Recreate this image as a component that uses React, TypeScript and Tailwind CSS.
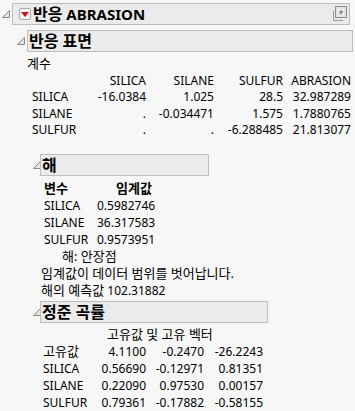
import React from "react";

// JMP-style report outline: 반응 ABRASION
const font = { fontFamily: '"Noto Sans", "Noto Sans CJK KR", sans-serif' };

function Disclosure({ className = "" }: { className?: string }) {
  return (
    <svg width="8" height="8" viewBox="0 0 8 8" className={className}>
      <polygon points="7.5,0.5 7.5,7.5 0.5,7.5" fill="#e4e4e4" stroke="#8a8a8a" strokeWidth="1" />
    </svg>
  );
}

function RedMenu() {
  return (
    <div className="ml-[6px] flex h-[12px] w-[12px] items-center justify-center rounded-[2px] border border-[#a8a8a8] bg-[#f4f4f4]">
      <svg width="8" height="5" viewBox="0 0 8 5">
        <polygon points="0,0 8,0 4,5" fill="#d0141a" />
      </svg>
    </div>
  );
}

function StarIcon() {
  return (
    <svg width="16" height="16" viewBox="0 0 16 16" className="mr-[1px]">
      <path d="M1.5 5 V14.5 H11" fill="none" stroke="#9a9a9a" strokeWidth="1" />
      <rect x="3.5" y="0.5" width="11" height="11" fill="#ececec" stroke="#8c8c8c" strokeWidth="1" />
      <rect x="5" y="2" width="8" height="8" fill="#f6f6f6" stroke="#c4c4c4" strokeWidth="0.6" />
      <polygon points="9,3 9.8,5.2 12,5.3 10.3,6.6 10.9,8.8 9,7.5 7.1,8.8 7.7,6.6 6,5.3 8.2,5.2" fill="#8a8a8a" />
    </svg>
  );
}

function Header({ width, children }: { width: string; children?: React.ReactNode }) {
  return (
    <div className={`flex h-[22px] items-center border border-[#bdbdbd] bg-[#ebebeb] ${width}`}>
      {children}
    </div>
  );
}

// Korean runs are set a touch larger, like Malgun Gothic next to Segoe UI
function Ko({ children, className = "" }: { children: React.ReactNode; className?: string }) {
  return <span className={`text-[13px] leading-none ${className}`}>{children}</span>;
}

export default function App() {
  const coef = [
    ["SILICA", "-16.0384", "1.025", "28.5", "32.987289"],
    ["SILANE", ".", "-0.034471", "1.575", "1.7880765"],
    ["SULFUR", ".", ".", "-6.288485", "21.813077"],
  ];
  const crit = [
    ["SILICA", "0.5982746"],
    ["SILANE", "36.317583"],
    ["SULFUR", "0.9573951"],
  ];
  const eigen = [
    ["고유값", "4.1100", "-0.2470", "-26.2243"],
    ["SILICA", "0.56690", "-0.12971", "0.81351"],
    ["SILANE", "0.22090", "0.97530", "0.00157"],
    ["SULFUR", "0.79361", "-0.17882", "-0.58155"],
  ];

  return (
    <div className="h-[411px] w-[355px] overflow-hidden bg-[#f7f7f7] text-[12px] text-black" style={font}>
      {/* top outline */}
      <div className="flex items-start pt-[3px]">
        <Disclosure className="ml-[2px] mt-[7px]" />
        <div className="ml-[2px]">
          <Header width="w-[338px]">
            <RedMenu />
            <span className="ml-[2px] text-[15px] font-bold leading-none">
              <span className="text-[16px]">반응</span> ABRASION
            </span>
            <div className="flex-1" />
            <StarIcon />
          </Header>
        </div>
      </div>

      {/* 반응 표면 */}
      <div className="mt-[5px] flex items-start">
        <Disclosure className="ml-[17px] mt-[7px]" />
        <div className="ml-[2px]">
          <Header width="w-[326px]">
            <span className="ml-[1px] text-[16px] font-bold leading-none">반응 표면</span>
          </Header>
        </div>
      </div>

      <div className="ml-[27px] mt-[4px] leading-[16.5px]">
        <Ko>계수</Ko>
      </div>
      <div className="ml-[32px] grid grid-cols-[60px_54px_68px_69px_68px] leading-[16.5px]">
        <div />
        <div className="text-right">SILICA</div>
        <div className="text-right">SILANE</div>
        <div className="text-right">SULFUR</div>
        <div className="text-right">ABRASION</div>
        {coef.map((r) =>
          r.map((c, i) => (
            <div key={r[0] + i} className={i === 0 ? "" : "text-right"}>
              {c}
            </div>
          ))
        )}
      </div>

      {/* 해 */}
      <div className="mt-[15px] flex items-start">
        <Disclosure className="ml-[33px] mt-[7px]" />
        <div className="ml-[-1px]">
          <Header width="w-[169px]">
            <span className="ml-[1px] text-[16px] font-bold leading-none">해</span>
          </Header>
        </div>
      </div>

      <div className="mt-[4px] leading-[17px]">
        <div className="ml-[44px] grid grid-cols-[53px_55px]">
          <div>
            <Ko className="font-bold">변수</Ko>
          </div>
          <div className="text-right">
            <Ko className="font-bold">임계값</Ko>
          </div>
          {crit.map(([k, v]) => (
            <React.Fragment key={k}>
              <div>{k}</div>
              <div className="text-right">{v}</div>
            </React.Fragment>
          ))}
        </div>
        <div className="ml-[62px]">
          <Ko>해: 안장점</Ko>
        </div>
        <div className="ml-[41px]">
          <Ko>임계값이 데이터 범위를 벗어납니다.</Ko>
        </div>
        <div className="ml-[41px]">
          <Ko>해의 예측값</Ko> 102.31882
        </div>
      </div>

      {/* 정준 곡률 */}
      <div className="mt-[2px] flex items-start">
        <Disclosure className="ml-[33px] mt-[7px]" />
        <div className="ml-[-1px]">
          <Header width="w-[228px]">
            <span className="ml-[1px] text-[16px] font-bold leading-none">정준 곡률</span>
          </Header>
        </div>
      </div>

      <div className="mt-[3px] leading-[17px]">
        <div className="ml-[107px]">
          <Ko>고유값 및 고유 벡터</Ko>
        </div>
        <div className="ml-[43px] grid grid-cols-[50px_53px_58px_59px]">
          {eigen.map((r) =>
            r.map((c, i) => (
              <div key={r[0] + i} className={i === 0 ? "" : "text-right"}>
                {i === 0 && r[0] === "고유값" ? <Ko>{c}</Ko> : c}
              </div>
            ))
          )}
        </div>
      </div>
    </div>
  );
}
